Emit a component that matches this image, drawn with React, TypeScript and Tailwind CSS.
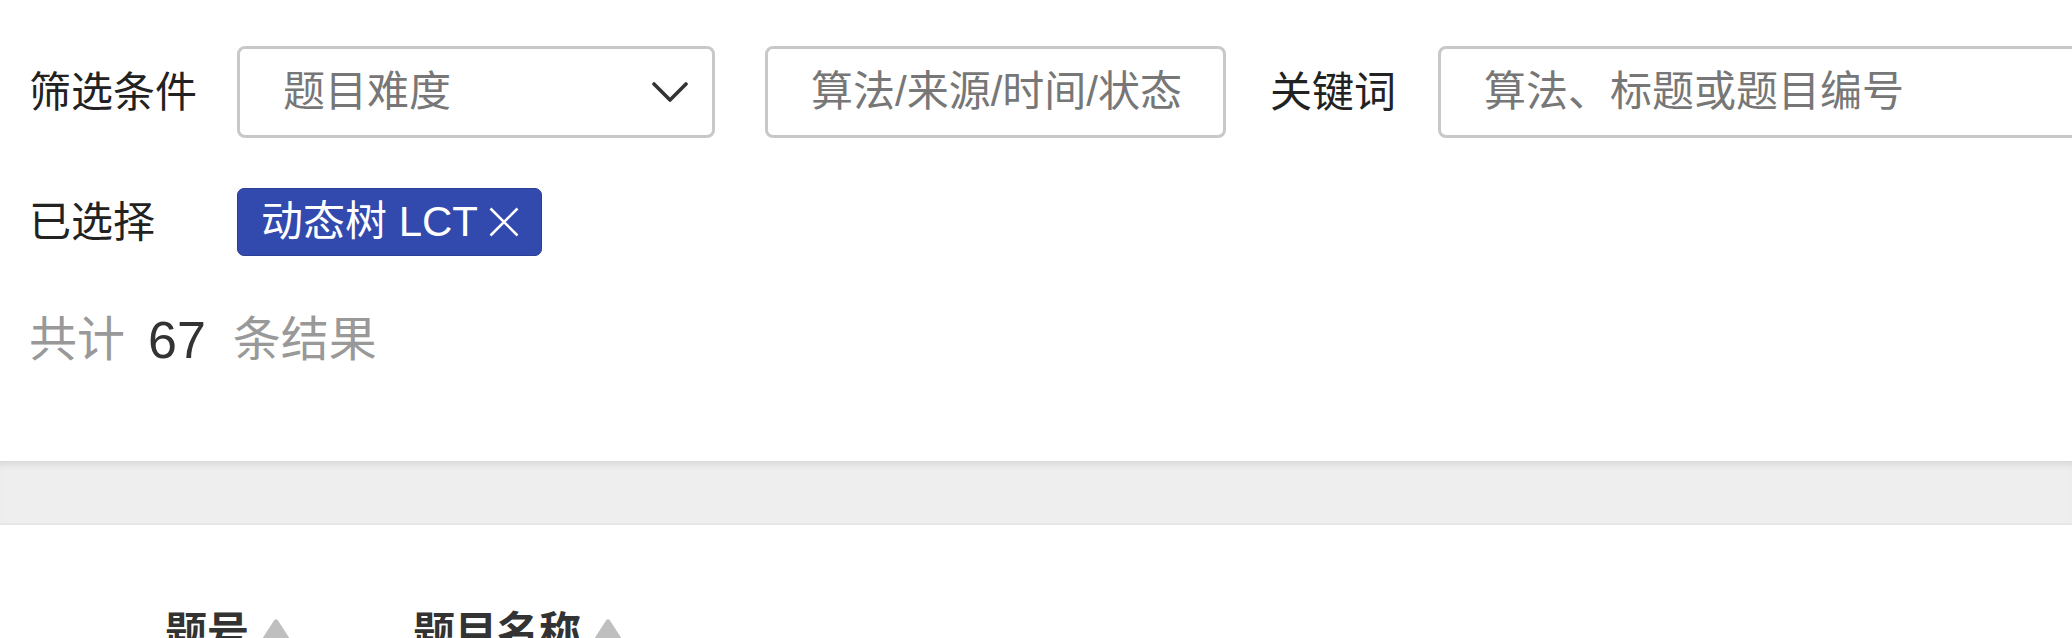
const font = {
  fontFamily: '"Liberation Sans", "Noto Sans CJK SC", sans-serif',
};

const SortIcon = () => (
  <svg width="36" height="30" viewBox="0 0 36 30" className="ml-[9px]">
    <path
      d="M16 2.5 Q18 0 20 2.5 L34.5 25 Q35.5 30 32 30 L4 30 Q0.5 30 1.5 25 Z"
      fill="#bfbfbf"
    />
  </svg>
);

const Chevron = () => (
  <svg width="36" height="22" viewBox="0 0 36 22">
    <polyline
      points="2,3 18,19 34,3"
      fill="none"
      stroke="#333"
      strokeWidth="3.6"
      strokeLinecap="round"
      strokeLinejoin="round"
    />
  </svg>
);

const FilterBox = ({
  placeholder,
  width,
  select,
}: {
  placeholder: string;
  width: string;
  select?: boolean;
}) => (
  <div
    className={`${width} h-[92px] shrink-0 border-[3px] border-[#c8c8c8] rounded-[8px] flex items-center justify-between pl-[43px] pr-[24px]`}
  >
    <span className="text-[42px] text-[#777] leading-none">{placeholder}</span>
    {select && <Chevron />}
  </div>
);

export default function App() {
  return (
    <div className="w-[2072px] h-[638px] overflow-hidden bg-white" style={font}>
      {/* filter card */}
      <div className="h-[461px] pt-[46px] pl-[29px] flex flex-col bg-white relative z-10">
        <div className="flex items-center h-[92px]">
          <div className="w-[208px] shrink-0 text-[42px] text-[#222]">筛选条件</div>
          <FilterBox placeholder="题目难度" width="w-[478px]" select />
          <div className="w-[50px] shrink-0" />
          <FilterBox placeholder="算法/来源/时间/状态" width="w-[461px]" />
          <div className="shrink-0 ml-[44px] mr-[42px] text-[42px] text-[#222]">关键词</div>
          <FilterBox placeholder="算法、标题或题目编号" width="w-[700px]" />
        </div>

        <div className="flex items-center h-[68px] mt-[50px]">
          <div className="w-[208px] shrink-0 text-[42px] text-[#222]">已选择</div>
          <div className="h-[68px] flex items-center bg-[#3249ad] border border-[#2c3f95] rounded-[7px] pl-[23px] pr-[22px] text-white text-[42px]">
            <span className="leading-none">动态树 LCT</span>
            <svg width="30" height="30" viewBox="0 0 30 30" className="ml-[11px]">
              <path d="M1.5 1.5 L28.5 28.5 M28.5 1.5 L1.5 28.5" stroke="white" strokeWidth="2.6" />
            </svg>
          </div>
        </div>

        <div className="flex items-center h-[64px] mt-[52px] text-[48px]">
          <span className="text-[#999]">共计</span>
          <span className="text-[#333] ml-[23px] mr-[27px] text-[52px]">67</span>
          <span className="text-[#999]">条结果</span>
        </div>
      </div>

      {/* separator band */}
      <div className="h-[64px] bg-[#eeeeee] border-b-2 border-[#e6e6e6] shadow-[inset_0_8px_8px_-6px_rgba(0,0,0,0.12)]" />

      {/* table header */}
      <div className="flex items-center mt-[76px] text-[42px] font-bold text-[#333]">
        <div className="flex items-center ml-[165px]">
          <span>题号</span>
          <SortIcon />
        </div>
        <div className="flex items-center ml-[119px]">
          <span>题目名称</span>
          <SortIcon />
        </div>
      </div>
    </div>
  );
}
